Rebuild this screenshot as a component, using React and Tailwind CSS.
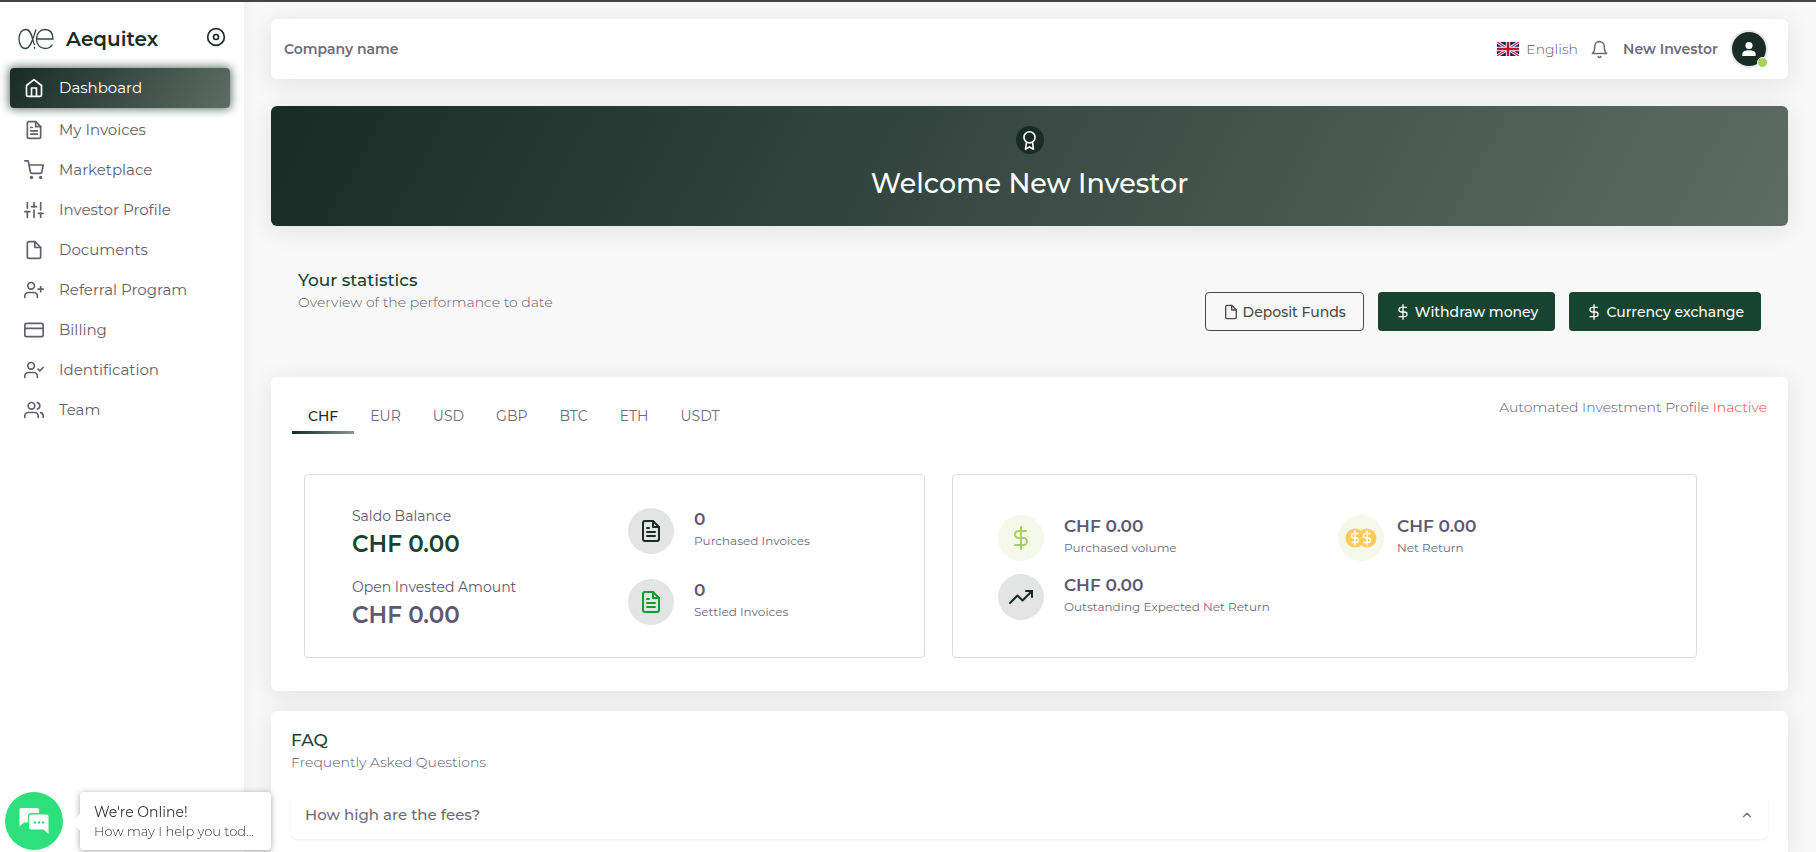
import React, { useState } from 'react';
import {
  FiAward,
  FiBell,
  FiChevronUp,
  FiCreditCard,
  FiDisc,
  FiDollarSign,
  FiFile,
  FiFileText,
  FiHome,
  FiShoppingCart,
  FiSliders,
  FiTrendingUp,
  FiUserCheck,
  FiUserPlus,
  FiUsers,
} from 'react-icons/fi';

const NAV_ITEMS = [
  { label: 'Dashboard', icon: FiHome },
  { label: 'My Invoices', icon: FiFileText },
  { label: 'Marketplace', icon: FiShoppingCart },
  { label: 'Investor Profile', icon: FiSliders },
  { label: 'Documents', icon: FiFile },
  { label: 'Referral Program', icon: FiUserPlus },
  { label: 'Billing', icon: FiCreditCard },
  { label: 'Identification', icon: FiUserCheck },
  { label: 'Team', icon: FiUsers },
];

const CURRENCIES = ['CHF', 'EUR', 'USD', 'GBP', 'BTC', 'ETH', 'USDT'];

const Logo = () => (
  <svg width="36" height="22" viewBox="0 0 36 22" fill="none" stroke="#33453f" strokeWidth="1.3" aria-hidden="true">
    <path d="M18 1.5 C15.500 8 13 20.500 7.500 20.500 C3.500 20.500 1 16 1 11 C1 5.500 3.500 1.500 8 1.500 C14 1.500 14.500 13 16.500 17" />
    <path d="M16.500 20.800 V18.800" />
    <path d="M19 11 H35 C35 5 32 1.500 27 1.500 C22 1.500 18.500 5.500 18.500 11 C18.500 16.500 22 20.500 27 20.500 C30.500 20.500 33 19 34.500 16.500" />
  </svg>
);

const UkFlag = () => (
  <svg width="22" height="14" viewBox="0 0 60 36" preserveAspectRatio="none" aria-hidden="true">
    <rect width="60" height="36" fill="#012169" />
    <path d="M0 0 L60 36 M60 0 L0 36" stroke="#fff" strokeWidth="8" />
    <path d="M0 0 L60 36 M60 0 L0 36" stroke="#c8102e" strokeWidth="3" />
    <path d="M30 0 V36 M0 18 H60" stroke="#fff" strokeWidth="12" />
    <path d="M30 0 V36 M0 18 H60" stroke="#c8102e" strokeWidth="7" />
  </svg>
);

const Coins = () => (
  <svg width="32" height="20" viewBox="0 0 32 20" fill="none" aria-hidden="true">
    <circle cx="10" cy="10" r="9.500" fill="#ffcb5c" />
    <circle cx="22" cy="10" r="9.500" fill="#ffcb5c" />
    <g stroke="#fff" strokeWidth="1.400" strokeLinecap="round" strokeLinejoin="round">
      <path d="M10 3 V17 M13 5.500 H8.800 a2.200 2.200 0 0 0 0 4.500 H11.200 a2.200 2.200 0 0 1 0 4.500 H7" />
      <path d="M22 3 V17 M25 5.500 H20.800 a2.200 2.200 0 0 0 0 4.500 H23.200 a2.200 2.200 0 0 1 0 4.500 H19" />
    </g>
  </svg>
);

const Sidebar = () => (
  <aside className="flex w-61 shrink-0 flex-col bg-white shadow-[0_0_15px_0_rgba(34,41,47,0.05)]">
    <div className="flex items-center pt-[21px] pr-[18px] pl-[18px]">
      <a href="#home" className="flex items-center gap-3">
        <Logo />
        <span className="text-xl leading-8 font-semibold text-[#182c25]">Aequitex</span>
      </a>
      <button type="button" aria-label="Collapse menu" className="ml-auto pb-1 text-[#182c25]">
        <FiDisc size={20} />
      </button>
    </div>
    <nav className="flex flex-col pt-[13px] pr-3.5 pl-2.5">
      {NAV_ITEMS.map(({ label, icon: Icon }, i) => (
        <a
          key={label}
          href="#nav"
          className={
            i === 0
              ? 'mb-0.5 flex h-10 items-center gap-[15px] rounded bg-linear-118 from-[#182c25] to-[#5d6d66] pl-3.5 text-[15px] text-white shadow-[0_0_10px_1px_rgba(24,44,37,0.7)]'
              : 'flex h-10 items-center gap-[15px] pl-3.5 text-[15px] text-[#625f6e]'
          }
        >
          <Icon size={20} className="shrink-0" />
          <span>{label}</span>
        </a>
      ))}
    </nav>
  </aside>
);

const Header = () => (
  <header className="flex h-15 items-center rounded-md bg-white pr-[22px] pl-[13px] text-sm text-[#6e6b7b] shadow-[0_4px_24px_0_rgba(34,41,47,0.1)]">
    <span className="font-semibold">Company name</span>
    <button type="button" className="ml-auto flex items-center gap-[7px] font-light text-[#5e5873]">
      <UkFlag />
      English
    </button>
    <button type="button" aria-label="Notifications" className="ml-3">
      <FiBell size={19} />
    </button>
    <button type="button" className="ml-3.5 flex items-center gap-3.5 font-semibold">
      New Investor
      <span className="relative flex size-[34px] items-center justify-center rounded-full bg-[#182c25] ring-2 ring-[#e6e8e7]">
        <svg width="16" height="18" viewBox="0 0 18 18" fill="#fff" aria-hidden="true">
          <circle cx="9" cy="5" r="4" />
          <path d="M1.500 17 V14.800 C1.500 11.500 5.500 10.500 9 10.500 C12.500 10.500 16.500 11.500 16.500 14.800 V17 Z" />
        </svg>
        <span className="absolute -right-0.5 -bottom-0.5 size-[11px] rounded-full border border-white bg-[#a9d158]" />
      </span>
    </button>
  </header>
);

const Banner = () => (
  <section className="mt-[27px] flex flex-col items-center rounded-md bg-linear-118 from-[#182c25] to-[#5d6d66] pt-5 pb-6 text-white shadow-[0_4px_24px_0_rgba(34,41,47,0.1)]">
    <span className="flex size-7 items-center justify-center rounded-full bg-[#182c25]">
      <FiAward size={19} />
    </span>
    <h1 className="mt-3 text-[27px] leading-9 font-medium">Welcome New Investor</h1>
  </section>
);

const StatsHeader = () => (
  <section className="mt-[42px] flex items-start px-[27px] pb-[46px]">
    <div>
      <h2 className="text-[17px] leading-6 font-medium text-[#174331]">Your statistics</h2>
      <p className="text-sm leading-5 font-light text-[#5e5873]">Overview of the performance to date</p>
    </div>
    <div className="mt-6 ml-auto flex gap-3.5 text-sm font-medium">
      <button type="button" className="flex h-[39px] items-center gap-1 rounded border border-[#4b4b4b] px-[17px] text-[#4b4b4b]">
        <FiFile size={16} />
        Deposit Funds
      </button>
      <button type="button" className="flex h-[39px] items-center gap-1 rounded bg-[#174331] px-[17px] text-white">
        <FiDollarSign size={16} />
        Withdraw money
      </button>
      <button type="button" className="flex h-[39px] items-center gap-1 rounded bg-[#174331] px-[17px] text-white">
        <FiDollarSign size={16} />
        Currency exchange
      </button>
    </div>
  </section>
);

const Balance = ({ label, value, className }) => (
  <div className="h-[71px]">
    <p className="text-sm leading-5 text-[#5e5873]">{label}</p>
    <p className={className}>{value}</p>
  </div>
);

const Stat = ({ icon, tone, value, label, gap = 'gap-5' }) => (
  <div className={`flex items-start ${gap}`}>
    <span className={`flex size-[46px] shrink-0 items-center justify-center rounded-full ${tone}`}>{icon}</span>
    <div>
      <p className="text-[17px] leading-[22px] font-semibold text-[#5e5873]">{value}</p>
      <p className="text-xs leading-[22px] text-[#6e6b7b]">{label}</p>
    </div>
  </div>
);

const Statistics = () => {
  const [currency, setCurrency] = useState('CHF');

  return (
    <section className="rounded-md bg-white px-[21px] pt-5 pb-[33px] shadow-[0_4px_24px_0_rgba(34,41,47,0.1)]">
      <div className="flex items-start justify-between">
        <div role="tablist" className="flex text-sm">
          {CURRENCIES.map(code => (
            <button
              key={code}
              type="button"
              role="tab"
              aria-selected={code === currency}
              onClick={() => setCurrency(code)}
              className={
                code === currency
                  ? 'relative h-[37px] px-4 font-medium text-[#182c25]'
                  : 'relative h-[37px] px-4 text-[#6e6b7b]'
              }
            >
              {code}
              {code === currency && (
                <span className="absolute inset-x-0 bottom-0 h-[3px] bg-linear-to-r from-[#182c25] to-[#8b9893]" />
              )}
            </button>
          ))}
        </div>
        <p className="text-sm leading-5 font-light text-[#5e5873]">
          Automated Investment Profile <span className="text-[#ea3f41]">Inactive</span>
        </p>
      </div>

      <div className="mt-10 mr-[70px] ml-3 grid grid-cols-[5fr_6fr] gap-[27px]">
        <div className="grid grid-cols-[276fr_296fr] rounded border border-[#dcdcdc] pt-[31px] pb-[9px] pl-[47px]">
          <div>
            <Balance
              label="Saldo Balance"
              value={`${currency} 0.00`}
              className="mt-0.5 text-[23px] leading-8 font-semibold text-[#174331]"
            />
            <Balance
              label="Open Invested Amount"
              value={`${currency} 0.00`}
              className="mt-0.5 text-[23px] leading-8 font-semibold text-[#5e5873]"
            />
          </div>
          <div className="flex flex-col gap-[25px] pt-0.5">
            <Stat
              tone="bg-[#e3e5e4] text-[#182c25]"
              icon={<FiFileText size={24} />}
              value="0"
              label="Purchased Invoices"
            />
            <Stat
              tone="bg-[#e3e5e4] text-[#0f9d2c]"
              icon={<FiFileText size={24} />}
              value="0"
              label="Settled Invoices"
            />
          </div>
        </div>

        <div className="grid grid-cols-[340fr_358fr] content-start gap-y-[13px] rounded border border-[#dcdcdc] pt-10 pl-[45px]">
          <Stat
            tone="bg-[#f4f9ea] text-[#a9d158]"
            icon={<FiDollarSign size={24} />}
            value={`${currency} 0.00`}
            label="Purchased volume"
          />
          <Stat
            tone="bg-[#f4f9ea]"
            icon={<Coins />}
            value={`${currency} 0.00`}
            label="Net Return"
            gap="gap-[13px]"
          />
          <Stat
            tone="bg-[#e3e5e4] text-[#182c25]"
            icon={<FiTrendingUp size={24} />}
            value={`${currency} 0.00`}
            label="Outstanding Expected Net Return"
          />
        </div>
      </div>
    </section>
  );
};

const Faq = () => (
  <section className="mt-5 flex-1 rounded-t-md bg-white px-5 pt-[17px] shadow-[0_4px_24px_0_rgba(34,41,47,0.1)]">
    <h2 className="text-[17px] leading-6 font-medium text-[#174331]">FAQ</h2>
    <p className="text-sm leading-5 font-light text-[#5e5873]">Frequently Asked Questions</p>
    <button
      type="button"
      aria-expanded="false"
      className="mt-[19px] flex h-12 w-full items-center justify-between rounded-md px-3.5 text-[15px] font-medium text-[#6e6b7b] shadow-[0_1px_2px_0_rgba(34,41,47,0.08)]"
    >
      How high are the fees?
      <FiChevronUp size={14} />
    </button>
  </section>
);

const ChatWidget = () => (
  <div className="fixed bottom-0.5 left-[5px] flex items-center gap-[17px]">
    <button
      type="button"
      aria-label="Open chat"
      className="flex size-[58px] items-center justify-center rounded-full bg-[#2ee07b]"
    >
      <svg width="30" height="28" viewBox="0 0 30 28" aria-hidden="true">
        <path d="M2 1 H18 Q20 1 20 3 V6 H12 Q9 6 9 9 V15.500 H5 L0.500 19.500 V2.500 Q0.500 1 2 1 Z" fill="#fff" />
        <path d="M12 7.500 H27.500 Q29.500 7.500 29.500 9.500 V27 L24.500 22.500 H12 Q10 22.500 10 20.500 V9.500 Q10 7.500 12 7.500 Z" fill="#fff" />
        <circle cx="16" cy="15.500" r="1.200" fill="#2ee07b" />
        <circle cx="20" cy="15.500" r="1.200" fill="#2ee07b" />
        <circle cx="24" cy="15.500" r="1.200" fill="#2ee07b" />
      </svg>
    </button>
    <div className="relative w-[191px] rounded bg-white px-3.5 py-2.5 shadow-[0_1px_6px_0_rgba(0,0,0,0.35)]">
      <span className="absolute top-6 -left-1.5 size-3 rotate-45 bg-white" />
      <p className="text-sm leading-5 text-[#333]">We're Online!</p>
      <p className="text-[13px] leading-[18px] font-light whitespace-nowrap text-[#333]">How may I help you tod...</p>
    </div>
  </div>
);

export default function App() {
  return (
    <div className="flex h-screen overflow-hidden border-t-2 border-[#444] bg-[#f8f8f8] font-[Montserrat,Inter,sans-serif]">
      <Sidebar />
      <main className="flex min-w-0 flex-1 flex-col pt-[17px] pr-7 pl-[27px]">
        <Header />
        <Banner />
        <StatsHeader />
        <Statistics />
        <Faq />
      </main>
      <ChatWidget />
    </div>
  );
}
